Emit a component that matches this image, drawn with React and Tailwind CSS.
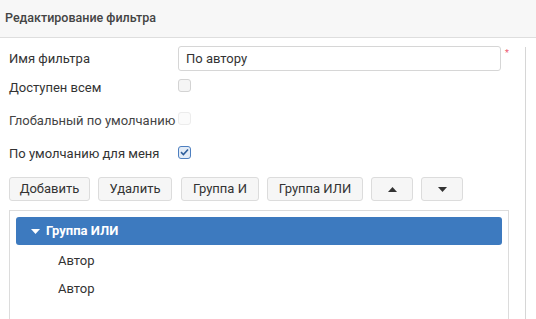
import React from "react";

const Checkbox = ({ checked, disabled }) => {
  if (checked) {
    return (
      <div className="w-[13px] h-[13px] rounded-[3px] border border-[#4d7fc0] bg-[#e3ecf7] flex items-center justify-center">
        <svg width="9" height="8" viewBox="0 0 9 8">
          <path d="M1 4.2 L3.4 6.5 L8 1.5" fill="none" stroke="#2f5f9c" strokeWidth="1.6" />
        </svg>
      </div>
    );
  }
  return (
    <div
      className={`w-[13px] h-[13px] rounded-[3px] border ${
        disabled ? "border-[#ececec] bg-[#fbfbfb]" : "border-[#d3d3d3] bg-[#f5f5f5]"
      }`}
    ></div>
  );
};

const Btn = ({ children, className = "" }) => (
  <button
    className={`h-[24px] rounded-[3px] border border-[#dcdcdc] bg-[#f6f6f6] text-[#333] text-[13px] flex items-center justify-center ${className}`}
  >
    {children}
  </button>
);

const Tri = ({ up, color = "#333" }) => (
  <svg width="9" height="5" viewBox="0 0 9 5">
    {up ? <path d="M0 5 L4.5 0 L9 5 Z" fill={color} /> : <path d="M0 0 L9 0 L4.5 5 Z" fill={color} />}
  </svg>
);

const App = () => {
  return (
    <div className="w-[536px] h-[319px] overflow-hidden bg-white text-[13px] text-[#333] font-['Roboto',sans-serif]">
      <div className="h-[38px] bg-[#f7f7f7] border-b border-[#dedede] flex items-center px-[5px]">
        <span className="font-medium text-[12.5px] text-[#444]">Редактирование фильтра</span>
      </div>
      <div className="flex">
        <div className="w-[525px] pl-[9px] pt-[8px]">
          <div className="flex items-center h-[25px]">
            <div className="w-[169px]">Имя фильтра</div>
            <div className="w-[323px] h-[25px] rounded-[3px] border border-[#d6d6d6] flex items-center px-[7px] text-[#333]">
              По автору
            </div>
            <span className="self-start ml-[4px] mt-[3px] text-[#ec5a6e] text-[9px] leading-none">*</span>
          </div>
          <div className="flex items-center h-[33px]">
            <div className="w-[169px]">Доступен всем</div>
            <div className="-mt-[4px]">
              <Checkbox />
            </div>
          </div>
          <div className="flex items-center h-[33px]">
            <div className="w-[169px] text-[#444]">Глобальный по умолчанию</div>
            <div className="-mt-[4px]">
              <Checkbox disabled />
            </div>
          </div>
          <div className="flex items-center h-[33px]">
            <div className="w-[169px]">По умолчанию для меня</div>
            <div className="-mt-[3px]">
              <Checkbox checked />
            </div>
          </div>
          <div className="flex gap-[8px] mt-[7px]">
            <Btn className="w-[81px]">Добавить</Btn>
            <Btn className="w-[74px]">Удалить</Btn>
            <Btn className="w-[78px] ml-[1px]">Группа И</Btn>
            <Btn className="w-[96px]">Группа ИЛИ</Btn>
            <Btn className="w-[42px]">
              <Tri up />
            </Btn>
            <Btn className="w-[42px]">
              <Tri />
            </Btn>
          </div>
          <div className="mt-[9px] w-[500px] h-[120px] border border-[#dcdcdc] px-[6px] pt-[6px]">
            <div className="h-[28px] rounded-[3px] bg-[#3d7abf] flex items-center pl-[15px] text-white font-bold">
              <Tri color="#fff" />
              <span className="ml-[6px]">Группа ИЛИ</span>
            </div>
            <div className="mt-[2px] h-[28px] flex items-center pl-[42px]">Автор</div>
            <div className="h-[28px] flex items-center pl-[42px]">Автор</div>
          </div>
        </div>
        <div className="mt-[9px] h-[300px] border-l border-[#d6d6d6]"></div>
      </div>
    </div>
  );
};

export default App;
